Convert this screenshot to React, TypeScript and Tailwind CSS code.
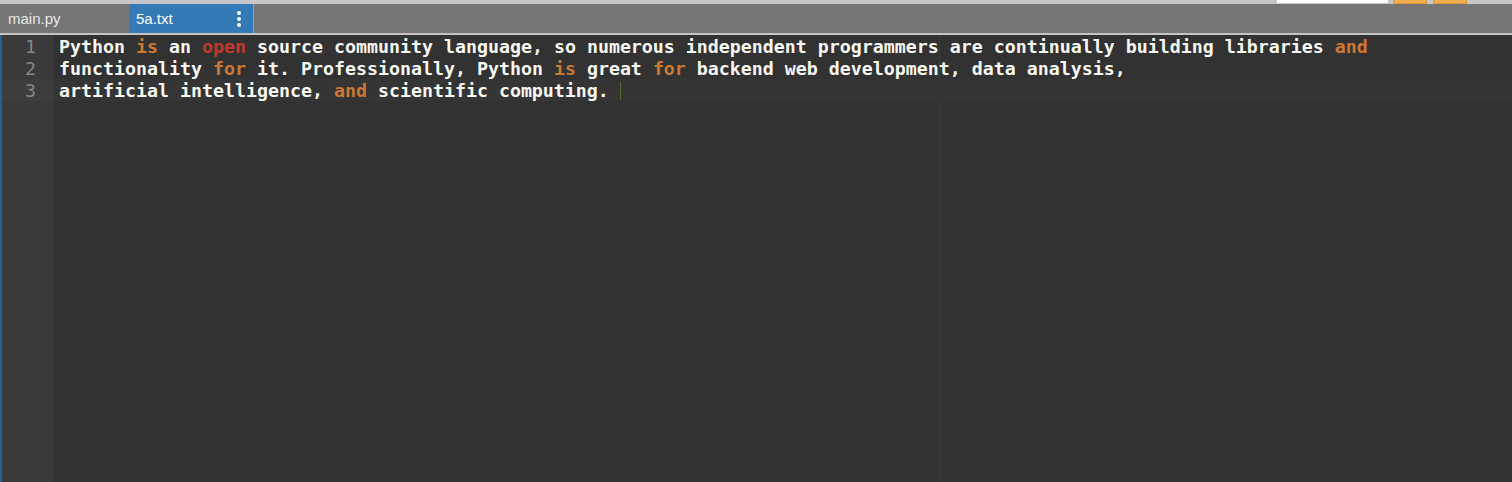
import React from 'react';

type Tok = { t: string; c?: string };

const K = 'text-[#cc7832]';
const R = 'text-[#c0392b]';

const lines: Tok[][] = [
  [
    { t: 'Python ' }, { t: 'is', c: K }, { t: ' an ' }, { t: 'open', c: R },
    { t: ' source community language, so numerous independent programmers are continually building libraries ' },
    { t: 'and', c: K },
  ],
  [
    { t: 'functionality ' }, { t: 'for', c: K }, { t: ' it. Professionally, Python ' }, { t: 'is', c: K },
    { t: ' great ' }, { t: 'for', c: K }, { t: ' backend web development, data analysis,' },
  ],
  [
    { t: 'artificial intelligence, ' }, { t: 'and', c: K }, { t: ' scientific computing. ' },
  ],
];

export default function App() {
  return (
    <div className="w-[1512px] h-[482px] overflow-hidden flex flex-col bg-[#323232]">
      {/* top toolbar edge */}
      <div className="h-[4px] bg-[#c6c6c6] flex items-start shrink-0">
        <div className="ml-[1277px] w-[111px] h-[3px] bg-white" />
        <div className="ml-[5px] w-[34px] h-[4px] bg-[#f0ad4e] border-b border-x border-[#e09a3a]" />
        <div className="ml-[6px] w-[34px] h-[4px] bg-[#f0ad4e] border-b border-x border-[#e09a3a]" />
      </div>

      {/* tabs */}
      <div className="h-[29px] bg-[#767676] flex shrink-0 font-['Liberation_Sans',Arial,sans-serif] text-[15px]">
        <div className="w-[129px] pl-[8px] pt-[1px] flex items-center text-[#e8e8e8]">main.py</div>
        <div className="w-[124px] pl-[7px] pr-[12px] flex items-center justify-between bg-[#337ab7] text-white">
          <span className="pt-[1px]">5a.txt</span>
          <span className="flex flex-col gap-[2px]">
            <span className="w-[4px] h-[4px] rounded-full bg-white" />
            <span className="w-[4px] h-[4px] rounded-full bg-white" />
            <span className="w-[4px] h-[4px] rounded-full bg-white" />
          </span>
        </div>
        <div className="w-[1px] bg-[#9c9c9c]" />
      </div>
      <div className="h-[2px] bg-[#c4c4c4] shrink-0" />

      {/* editor */}
      <div className="flex-1 flex min-h-0">
        <div className="w-[2px] bg-[#245f98] shrink-0" />
        <div className="w-[52px] bg-[#3a3a3a] shrink-0 font-['DejaVu_Sans_Mono',monospace] text-[18.27px] leading-[22px] text-[#868686]">
          {lines.map((_, i) => (
            <div key={i} className={`h-[22px] pt-[1px] pr-[18px] text-right ${i === 2 ? 'bg-[#3d3d3d]' : ''}`}>{i + 1}</div>
          ))}
        </div>
        <div className="flex-1 relative font-['DejaVu_Sans_Mono',monospace] font-bold text-[18.27px] leading-[22px] text-[#f8f8f2]">
          <div className="absolute top-0 bottom-0 left-[885px] w-[1px] bg-[#3c3c3c]" />
          {lines.map((ln, i) => (
            <div key={i} className={`relative h-[22px] pt-[1px] pl-[5px] whitespace-pre ${i === 2 ? 'bg-[#353535]' : ''}`}>
              {ln.map((tok, j) => (
                <span key={j} className={tok.c}>{tok.t}</span>
              ))}
              {i === 2 && <span className="inline-block align-top mt-[2px] w-[1px] h-[18px] bg-[#4f6a2c]" />}
            </div>
          ))}
        </div>
      </div>
    </div>
  );
}
